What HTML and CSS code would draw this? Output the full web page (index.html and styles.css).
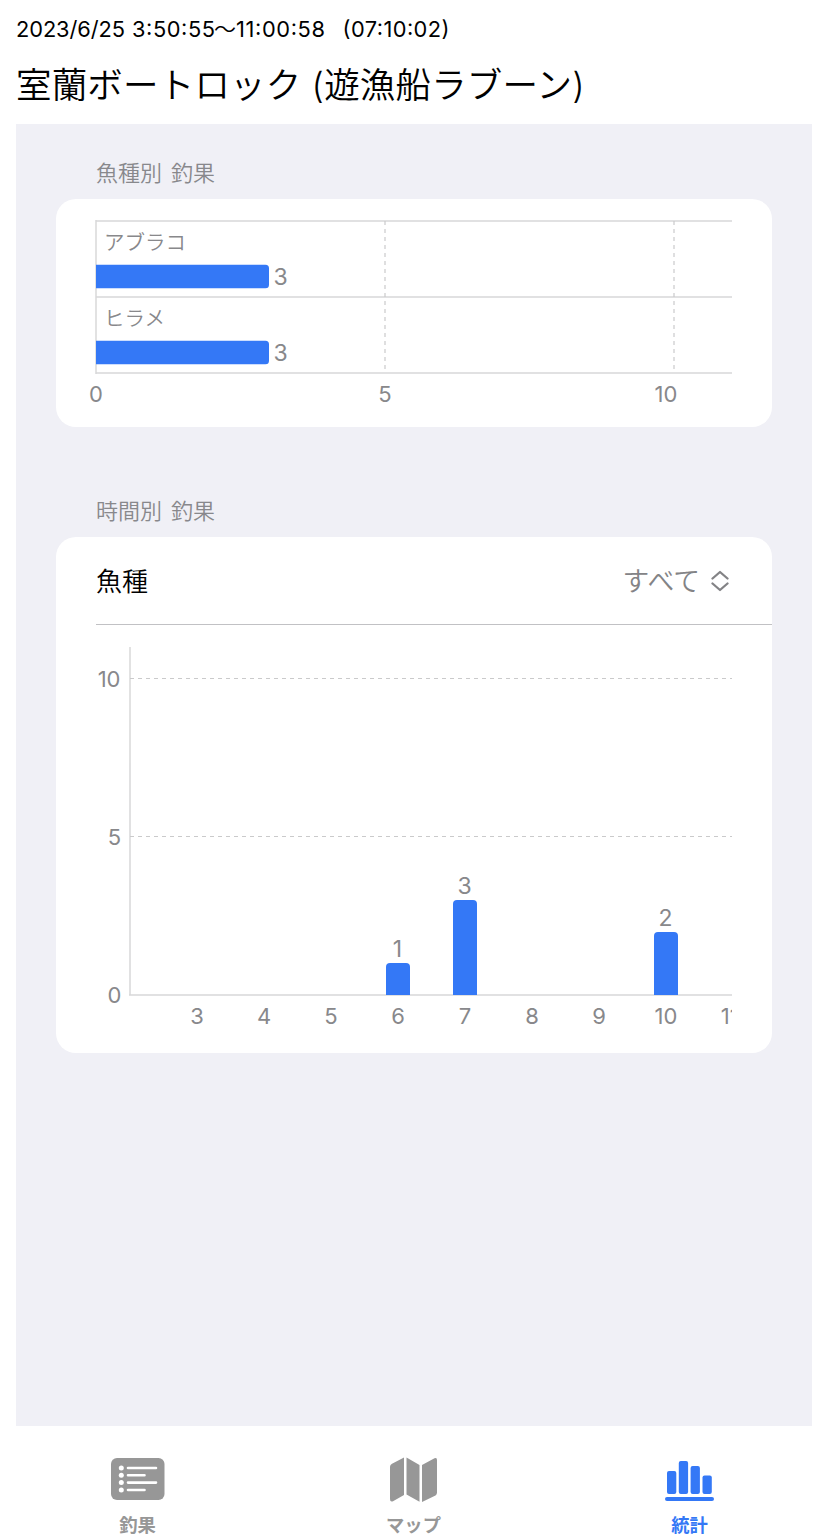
FILE: index.html
```html
<!DOCTYPE html>
<html lang="ja">
<head>
<meta charset="utf-8">
<title>室蘭ボートロック</title>
<link rel="stylesheet" href="styles.css">
</head>
<body>
<div class="screen">
  <header class="header">
    <div class="period"><svg class="period-text" width="450" height="36"><text x="16" y="27" textLength="109">2023/6/25</text><text x="132" y="27" textLength="83">3:50:55</text><text class="jp" x="214" y="27">～</text><text x="236" y="27" textLength="89">11:00:58</text><text x="342.500" y="27" textLength="107">(07:10:02)</text></svg></div>
    <h1 class="title">室蘭ボートロック (遊漁船ラブーン)</h1>
  </header>
  <main class="content">
    <section class="section">
      <h2 class="section-title">魚種別 釣果</h2>
      <div class="card">
        <svg class="chart" width="716" height="228">
          <g class="axis">
            <path d="M40 22H676M40 98H676M40 174H676M40 21V175"/>
            <path class="dash" d="M329 22V174M618 22V174"/>
          </g>
          <g class="bar">
            <path d="M40 65.800H209.500a3.500 3.500 0 0 1 3.500 3.500V85.800a3.500 3.500 0 0 1-3.500 3.500H40z"/>
            <path d="M40 141.800H209.500a3.500 3.500 0 0 1 3.500 3.500V161.800a3.500 3.500 0 0 1-3.500 3.500H40z"/>
          </g>
          <g class="jp">
            <text x="48" y="51">アブラコ</text>
            <text x="48" y="127">ヒラメ</text>
          </g>
          <g class="value">
            <text x="224.5" y="86">3</text>
            <text x="224.5" y="162">3</text>
          </g>
          <g class="tick">
            <text x="40" y="203">0</text>
            <text x="329" y="203">5</text>
            <text x="610" y="203">10</text>
          </g>
        </svg>
      </div>
    </section>
    <section class="section">
      <h2 class="section-title">時間別 釣果</h2>
      <div class="card">
        <div class="picker">
          <span class="picker-label">魚種</span>
          <span class="picker-value"><span class="picker-text">すべて</span>
            <svg class="chevrons" width="18" height="22" viewBox="0 0 18 22"><path d="M1.500 8.500L9 2L16.500 8.500M1.500 13.500L9 20L16.500 13.500"/></svg>
          </span>
        </div>
        <svg class="chart" width="716" height="428">
          <defs><clipPath id="plot"><rect width="676" height="428"/></clipPath></defs>
          <g class="axis">
            <path d="M74 22V370M73 370H676"/>
            <path class="dash" d="M74 53.5H676M74 211.500H676"/>
          </g>
          <g class="bar">
            <path d="M330 370V342a4 4 0 0 1 4-4h16a4 4 0 0 1 4 4v28z"/>
            <path d="M397 370V279a4 4 0 0 1 4-4h16a4 4 0 0 1 4 4v91z"/>
            <path d="M598 370V311a4 4 0 0 1 4-4h16a4 4 0 0 1 4 4v59z"/>
          </g>
          <g class="value">
            <text x="341.500" y="332">1</text>
            <text x="408.500" y="269">3</text>
            <text x="609.500" y="301">2</text>
          </g>
          <g class="tick tick-y">
            <text x="64.500" y="62">10</text>
            <text x="65" y="220">5</text>
            <text x="65.500" y="378">0</text>
          </g>
          <g class="tick" clip-path="url(#plot)">
            <text x="141" y="399">3</text>
            <text x="208" y="399">4</text>
            <text x="275" y="399">5</text>
            <text x="342" y="399">6</text>
            <text x="409" y="399">7</text>
            <text x="476" y="399">8</text>
            <text x="543" y="399">9</text>
            <text x="610" y="399">10</text>
            <text x="673.800" y="399">11</text>
          </g>
        </svg>
      </div>
    </section>
  </main>
  <nav class="tabs">
    <a class="tab">
      <svg class="icon" width="56" height="48" viewBox="0 0 56 48">
        <rect x="1" y="4" width="53.500" height="42" rx="6"/>
        <g class="cut"><circle cx="11.300" cy="14" r="2.500"/><circle cx="11.300" cy="21.300" r="2.500"/><circle cx="11.300" cy="28.600" r="2.500"/><circle cx="11.300" cy="36" r="2.500"/>
        <path d="M18 14H46M18 21.300H34.500M18 28.600H46M18 36H34.500"/></g>
      </svg>
      <span class="tab-label">釣果</span>
    </a>
    <a class="tab">
      <svg class="icon" width="56" height="48" viewBox="0 0 56 48">
        <path d="M4 13Q4 10.800 6 9.700L18 3.500V41L7 47.300Q4 48.500 4 45zM20.500 3.500L33.500 11V47.800L20.500 40.500zM36 11L48.500 4.300Q51 3.200 51 6V38.500Q51 40.500 49.500 41.400L36 48z"/>
      </svg>
      <span class="tab-label">マップ</span>
    </a>
    <a class="tab active">
      <svg class="icon" width="56" height="48" viewBox="0 0 56 48">
        <rect x="5" y="17" width="9.300" height="23" rx="2"/><rect x="16.800" y="7" width="9.300" height="33" rx="2"/><rect x="28.600" y="12" width="9.300" height="28" rx="2"/><rect x="40.500" y="21.500" width="9.300" height="18.500" rx="2"/><rect x="3" y="43" width="49" height="4" rx="2"/>
      </svg>
      <span class="tab-label">統計</span>
    </a>
  </nav>
</div>
</body>
</html>
```
FILE: styles.css
```css
* { box-sizing: border-box; }
body {
  margin: 0;
  background: #fff;
  color: #000;
  font-family: Inter, "Noto Sans CJK JP", sans-serif;
}
.screen {
  width: 828px;
  height: 1540px;
  display: flex;
  flex-direction: column;
  overflow: hidden;
}
.header { height: 124px; flex: none; padding-top: 10px; }
.period { height: 52px; }
.period-text { display: block; font-size: 21.800px; }
.period-text .jp { font-family: "Noto Sans CJK JP", sans-serif; font-size: 22px; font-weight: 350; }
.title {
  margin: 0 0 0 16px;
  font-family: Inter, "Noto Sans CJK JP", sans-serif;
  font-size: 35.500px;
  font-weight: 350;
  letter-spacing: 0.180px;
  line-height: 48px;
  white-space: nowrap;
}
.content {
  height: 1302px;
  flex: none;
  margin: 0 16px;
  padding: 0 40px;
  background: #f0f0f6;
}
.section { padding-top: 31px; }
.section + .section { padding-top: 66px; }
.section-title {
  margin: 0;
  padding: 0 0 12px 40px;
  color: #88888c;
  font-family: "Noto Sans CJK JP", sans-serif;
  font-size: 22px;
  font-weight: 350;
  line-height: 32px;
  word-spacing: 4px;
}
.card { overflow: hidden; border-radius: 20px; background: #fff; }
.chart { display: block; }
.axis { fill: none; stroke: #d8d8d9; stroke-width: 1.500; }
.axis .dash { stroke: #cacacb; stroke-width: 1.200; stroke-dasharray: 4 4; }
.bar { fill: #3478f6; }
.chart text { fill: #88888b; }
.chart .jp { font-family: "Noto Sans CJK JP", sans-serif; font-size: 20.500px; font-weight: 350; }
.value { font-size: 23px; text-anchor: middle; }
.tick { font-size: 22px; text-anchor: middle; }
.tick-y { text-anchor: end; }
.picker {
  height: 88px;
  margin-left: 40px;
  padding-right: 43px;
  display: flex;
  align-items: center;
  justify-content: space-between;
  border-bottom: 1px solid #c1c1c4;
  font-family: "Noto Sans CJK JP", sans-serif;
  font-size: 26px;
  font-weight: 350;
  line-height: 38px;
}
.picker-label, .picker-text { padding-bottom: 1px; }
.picker-text { font-size: 26.800px; }
.picker-value { display: flex; align-items: center; gap: 11px; color: #838386; }
.chevrons { fill: none; stroke: #838386; stroke-width: 2.300; stroke-linecap: round; stroke-linejoin: round; }
.tabs { flex: 1; display: grid; grid-template-columns: repeat(3, 1fr); padding-top: 28px; }
.tab {
  display: flex;
  flex-direction: column;
  align-items: center;
  color: #979797;
  font-family: "Noto Sans CJK JP", sans-serif;
  font-size: 18.300px;
  font-weight: 600;
  line-height: 26px;
}
.tab-label { padding-right: 1px; }
.tab.active { color: #3478f6; }
.icon { display: block; margin-bottom: 9px; fill: currentColor; overflow: visible; }
.cut { fill: #fff; stroke: none; }
.cut path { stroke: #fff; stroke-width: 2.600; stroke-linecap: round; }
```
